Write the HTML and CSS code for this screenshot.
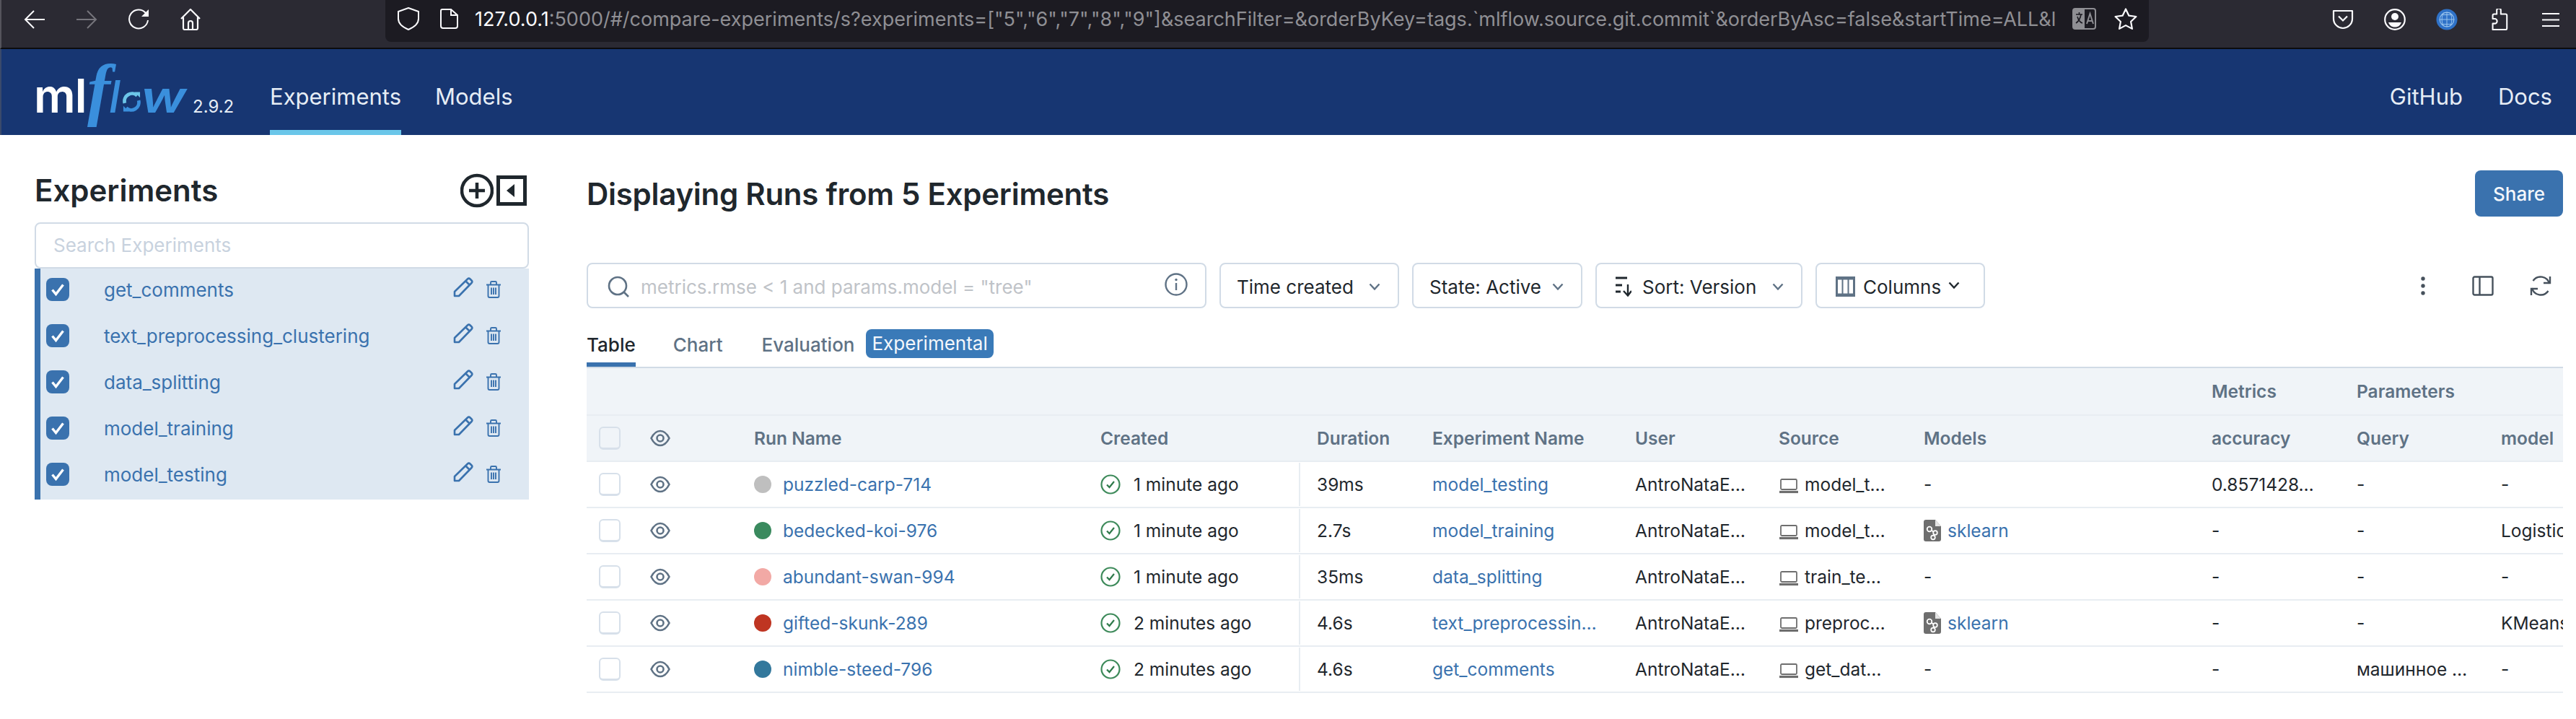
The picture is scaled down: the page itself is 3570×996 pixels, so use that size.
FILE: index.html
```html
<!DOCTYPE html>
<html lang="en">
<head>
<meta charset="utf-8">
<title>MLflow</title>
<link rel="stylesheet" href="styles.css">
</head>
<body>
<svg class="defs" xmlns="http://www.w3.org/2000/svg">
  <symbol id="i-pencil" viewBox="0 0 28 28"><path d="M2 26V20L20 2.5a2.5 2.5 0 0 1 3.5 0l2 2a2.5 2.5 0 0 1 0 3.5L8 26zM17.500 5.500l5 5" fill="none" stroke="currentColor" stroke-width="2.600" stroke-linejoin="round"/></symbol>
  <symbol id="i-trash" viewBox="0 0 22 24"><path d="M1 5.500H21M7 5.500V2.500a1.500 1.500 0 0 1 1.500-1.500h5a1.500 1.500 0 0 1 1.500 1.500v3M3.500 5.500V21a2 2 0 0 0 2 2h11a2 2 0 0 0 2-2V5.500M8 9.500V19M11 9.500V19M14 9.500V19" fill="none" stroke="currentColor" stroke-width="1.900"/></symbol>
  <symbol id="i-check" viewBox="0 0 32 32"><path d="M8.500 16.500l5 6 10-13" fill="none" stroke="#fff" stroke-width="3.400"/></symbol>
  <symbol id="i-eye" viewBox="0 0 28 24"><path d="M1.500 12C5 5 9 2 14 2s9 3 12.500 10C23 19 19 22 14 22S5 19 1.500 12z" fill="none" stroke="currentColor" stroke-width="2.600"/><circle cx="14" cy="12" r="4.500" fill="none" stroke="currentColor" stroke-width="2.600"/></symbol>
  <symbol id="i-ok" viewBox="0 0 28 28"><circle cx="14" cy="14" r="12.500" fill="none" stroke="#3d8a5a" stroke-width="2.200"/><path d="M9 14.500l3.500 3.500 6.500-8" fill="none" stroke="#2f7a4b" stroke-width="2.200"/></symbol>
  <symbol id="i-laptop" viewBox="0 0 26 21"><rect x="2" y="1" width="22" height="14" rx="1.500" fill="none" stroke="#6e6e6e" stroke-width="1.800"/><path d="M0 18.500H26" stroke="#6e6e6e" stroke-width="3.200"/></symbol>
  <symbol id="i-model" viewBox="0 0 24 30"><path d="M3 0H16L24 9V27a3 3 0 0 1-3 3H3a3 3 0 0 1-3-3V3a3 3 0 0 1 3-3z" fill="#6e6e6e"/><path d="M16 0V9H24z" fill="#e4e4e4"/><path d="M9 13l6 5-2 6" fill="none" stroke="#fff" stroke-width="1.800"/><circle cx="8" cy="13" r="3.300" fill="#6e6e6e" stroke="#fff" stroke-width="1.800"/><circle cx="16" cy="18" r="2.800" fill="#6e6e6e" stroke="#fff" stroke-width="1.800"/><circle cx="13" cy="24.500" r="2.800" fill="#6e6e6e" stroke="#fff" stroke-width="1.800"/></symbol>
  <symbol id="i-chev" viewBox="0 0 16 10"><path d="M1.500 1.500L8 8.500l6.500-7" fill="none" stroke="currentColor" stroke-width="2.400"/></symbol>
</svg>

<header class="browser">
  <div class="browser-nav">
    <svg class="bi" viewBox="0 0 30 30"><path d="M29 15H2M14 3L2 15l12 12" fill="none" stroke="#fbfbfe" stroke-width="2"/></svg>
    <svg class="bi" viewBox="0 0 30 30"><path d="M1 15H28M16 3l12 12-12 12" fill="none" stroke="#76757c" stroke-width="2"/></svg>
    <svg class="bi" viewBox="0 0 30 30"><path d="M25 6A13 13 0 1 0 28 16" fill="none" stroke="#fbfbfe" stroke-width="2"/><path d="M19 11H29V1z" fill="#fbfbfe"/></svg>
    <svg class="bi" viewBox="0 0 30 30"><path d="M2 14L15 1l13 13M5 12V27a2 2 0 0 0 2 2H23a2 2 0 0 0 2-2V12M12 29V20a3 3 0 0 1 6 0v9" fill="none" stroke="#fbfbfe" stroke-width="2.200"/></svg>
  </div>
  <div class="urlbar">
    <svg class="shield" viewBox="0 0 30 32"><path d="M15 1L29 6V16C29 23 22 28 15 31 8 28 1 23 1 16V6z" fill="none" stroke="#fbfbfe" stroke-width="2"/></svg>
    <svg class="page" viewBox="0 0 25 28"><path d="M3 1H15L24 9V24a3 3 0 0 1-3 3H4a3 3 0 0 1-3-3V3a2 2 0 0 1 2-2zM15 1V9H24" fill="none" stroke="#fbfbfe" stroke-width="2"/></svg>
    <div class="url"><span class="url-host">127.0.0.1</span>:5000/#/compare-experiments/s?experiments=["5","6","7","8","9"]&amp;searchFilter=&amp;orderByKey=tags.`mlflow.source.git.commit`&amp;orderByAsc=false&amp;startTime=ALL&amp;l</div>
    <svg class="translate" viewBox="0 0 33 30"><rect x="1" y="1" width="31" height="28" rx="3" fill="none" stroke="#8f8f94" stroke-width="2"/><path d="M1 4a3 3 0 0 1 3-3H17V29H4a3 3 0 0 1-3-3z" fill="#8f8f94"/><path d="M5 9H14M9.500 6V9M12 9C11 15 8 19 5 21M7 12C8 16 11 20 14 21" fill="none" stroke="#1c1b22" stroke-width="1.600"/><path d="M20 22L24.500 8 29 22M21.500 18H27.500" fill="none" stroke="#8f8f94" stroke-width="2"/></svg>
    <svg class="star" viewBox="0 0 32 30"><path d="M16 1.500l4.400 9.200 10 1.300-7.300 7 1.800 9.900-8.900-4.800-8.900 4.800 1.800-9.900-7.300-7 10-1.300z" fill="none" stroke="#fbfbfe" stroke-width="2.200" stroke-linejoin="round"/></svg>
  </div>
  <div class="browser-tools">
    <svg class="bi" viewBox="0 0 30 30"><path d="M2 3H28V14C28 22 21 27 15 27S2 22 2 14z" fill="none" stroke="#fbfbfe" stroke-width="2.200" stroke-linejoin="round"/><path d="M9 10.500l6 6 6-6" fill="none" stroke="#fbfbfe" stroke-width="2.200"/></svg>
    <svg class="bi" viewBox="0 0 30 30"><circle cx="15" cy="15" r="13.800" fill="none" stroke="#fbfbfe" stroke-width="2.200"/><circle cx="15" cy="11" r="5" fill="#fbfbfe"/><path d="M6 19H24C22 24 19 25.500 15 25.500S8 24 6 19z" fill="#fbfbfe"/></svg>
    <svg class="bi" viewBox="0 0 32 32"><circle cx="16" cy="16" r="15.500" fill="#2f72c8"/><circle cx="16" cy="16" r="10.500" fill="none" stroke="#9fc8ee" stroke-width="1.200"/><path d="M5 16H27M16 5V27M9 9H23M9 23H23M11 6C8 12 8 20 11 26M21 6C24 12 24 20 21 26" fill="none" stroke="#9fc8ee" stroke-width="1"/></svg>
    <svg class="bi" viewBox="0 0 30 32"><path d="M12 2.500a3 3 0 0 1 6 0V8H25a2 2 0 0 1 2 2V29a2 2 0 0 1-2 2H6V22H9a3.500 3.500 0 0 0 0-7H6V10a2 2 0 0 1 2-2H12z" fill="none" stroke="#fbfbfe" stroke-width="2.200" stroke-linejoin="round"/></svg>
    <svg class="bi" viewBox="0 0 30 30"><path d="M3 7H27M3 15.500H27M3 24H27" stroke="#fbfbfe" stroke-width="2.200"/></svg>
  </div>
</header>

<nav class="topnav">
  <div class="logo">
    <span class="logo-ml">ml</span><span class="logo-f">f</span><span class="logo-l">l</span>
    <svg class="logo-o" viewBox="0 0 26 30"><path d="M21 6A11 11 0 0 0 3 17" fill="none" stroke="#6cc5e8" stroke-width="5"/><path d="M5 24A11 11 0 0 0 23 13" fill="none" stroke="#3a8fdc" stroke-width="5"/><path d="M17 1H25V9z" fill="#6cc5e8"/><path d="M9 29H1V21z" fill="#3a8fdc"/></svg>
    <span class="logo-w">w</span>
    <span class="logo-ver">2.9.2</span>
  </div>
  <a class="navlink active">Experiments</a>
  <a class="navlink">Models</a>
  <div class="nav-right">
    <a class="navlink">GitHub</a>
    <a class="navlink">Docs</a>
  </div>
</nav>

<div class="content">
  <aside class="sidebar">
    <div class="side-head">
      <h2 class="side-title">Experiments</h2>
      <svg class="side-add" viewBox="0 0 46 48"><circle cx="23" cy="24" r="21" fill="none" stroke="#1f272d" stroke-width="4.500"/><path d="M23 13V35M12 24H34" stroke="#1f272d" stroke-width="4.500"/></svg>
      <svg class="side-collapse" viewBox="0 0 42 42"><rect x="2.500" y="2.500" width="37" height="37" fill="none" stroke="#1f272d" stroke-width="5"/><path d="M25 12V30L14 21z" fill="#1f272d"/></svg>
    </div>
    <div class="side-search">Search Experiments</div>
    <ul class="exp-list">
      <li class="exp"><span class="cb"><svg class="cb-mark"><use href="#i-check"/></svg></span><span class="exp-name">get_comments</span><svg class="pencil"><use href="#i-pencil"/></svg><svg class="trash"><use href="#i-trash"/></svg></li>
      <li class="exp"><span class="cb"><svg class="cb-mark"><use href="#i-check"/></svg></span><span class="exp-name">text_preprocessing_clustering</span><svg class="pencil"><use href="#i-pencil"/></svg><svg class="trash"><use href="#i-trash"/></svg></li>
      <li class="exp"><span class="cb"><svg class="cb-mark"><use href="#i-check"/></svg></span><span class="exp-name">data_splitting</span><svg class="pencil"><use href="#i-pencil"/></svg><svg class="trash"><use href="#i-trash"/></svg></li>
      <li class="exp"><span class="cb"><svg class="cb-mark"><use href="#i-check"/></svg></span><span class="exp-name">model_training</span><svg class="pencil"><use href="#i-pencil"/></svg><svg class="trash"><use href="#i-trash"/></svg></li>
      <li class="exp"><span class="cb"><svg class="cb-mark"><use href="#i-check"/></svg></span><span class="exp-name">model_testing</span><svg class="pencil"><use href="#i-pencil"/></svg><svg class="trash"><use href="#i-trash"/></svg></li>
    </ul>
  </aside>

  <main class="main">
    <div class="title-row">
      <h1 class="title">Displaying Runs from 5 Experiments</h1>
      <button class="share">Share</button>
    </div>

    <div class="toolbar">
      <div class="search">
        <svg class="search-ico" viewBox="0 0 30 30"><circle cx="14" cy="14" r="12" fill="none" stroke="#5f7285" stroke-width="2.600"/><path d="M22 22l7 7" stroke="#5f7285" stroke-width="2.600"/></svg>
        <span class="search-ph">metrics.rmse &lt; 1 and params.model = "tree"</span>
        <svg class="info-ico" viewBox="0 0 32 32"><circle cx="16" cy="16" r="14.500" fill="none" stroke="#5f7285" stroke-width="2.400"/><path d="M16 14V24" stroke="#5f7285" stroke-width="2.400"/><circle cx="16" cy="9.500" r="1.700" fill="#5f7285"/></svg>
      </div>
      <button class="tool tool-time"><span>Time created</span><svg class="chev"><use href="#i-chev"/></svg></button>
      <button class="tool tool-state"><span>State: Active</span><svg class="chev"><use href="#i-chev"/></svg></button>
      <button class="tool tool-sort">
        <svg class="sort-ico" viewBox="0 0 22 28"><path d="M0 2H16M0 12H9M0 21H7" stroke="#1f272d" stroke-width="3"/><path d="M17 11V26M11 20l6 6.500 5-6.500" fill="none" stroke="#1f272d" stroke-width="2.400"/></svg>
        <span>Sort: Version</span><svg class="chev"><use href="#i-chev"/></svg>
      </button>
      <button class="tool tool-cols">
        <svg class="cols-ico" viewBox="0 0 27 28"><rect x="1.500" y="1.500" width="24" height="25" fill="none" stroke="#5f7285" stroke-width="3"/><path d="M9.500 1.500V26.500M17.500 1.500V26.500" stroke="#5f7285" stroke-width="2"/><path d="M1.500 3H25.500M1.500 25H25.500" stroke="#5f7285" stroke-width="3"/></svg>
        <span>Columns</span><svg class="chev chev-dark"><use href="#i-chev"/></svg>
      </button>
      <div class="tool-right">
        <svg class="kebab" viewBox="0 0 6 26"><circle cx="3" cy="3" r="2.700" fill="#46515c"/><circle cx="3" cy="13" r="2.700" fill="#46515c"/><circle cx="3" cy="23" r="2.700" fill="#46515c"/></svg>
        <svg class="panel" viewBox="0 0 30 28"><rect x="1.500" y="1.500" width="27" height="25" rx="2" fill="none" stroke="#46515c" stroke-width="2.400"/><path d="M10.500 1.500V26.500" stroke="#46515c" stroke-width="2.400"/></svg>
        <svg class="refresh" viewBox="0 0 30 30"><path d="M27 12A12.500 12.500 0 0 0 4.500 8M3 18A12.500 12.500 0 0 0 25.500 22" fill="none" stroke="#46515c" stroke-width="2.400"/><path d="M28 2V11H19M2 28V19H11" fill="none" stroke="#46515c" stroke-width="2.400"/></svg>
      </div>
    </div>

    <div class="tabs">
      <span class="tab tab-active">Table</span>
      <span class="tab">Chart</span>
      <span class="tab">Evaluation</span>
      <span class="pill">Experimental</span>
    </div>

    <div class="table">
      <div class="grid head head-top">
        <span class="c-metrics">Metrics</span>
        <span class="c-params">Parameters</span>
      </div>
      <div class="grid head">
        <span class="box box-head"></span>
        <svg class="eye"><use href="#i-eye"/></svg>
        <span>Run Name</span>
        <span class="created">Created</span>
        <span>Duration</span>
        <span>Experiment Name</span>
        <span>User</span>
        <span>Source</span>
        <span>Models</span>
        <span>accuracy</span>
        <span>Query</span>
        <span>model</span>
      </div>

      <div class="grid row">
        <span class="box"></span>
        <svg class="eye"><use href="#i-eye"/></svg>
        <span class="run"><i class="dot dot-grey"></i><a class="link">puzzled-carp-714</a></span>
        <span class="created"><svg class="ok"><use href="#i-ok"/></svg>1 minute ago</span>
        <span>39ms</span>
        <a class="link">model_testing</a>
        <span>AntroNataE…</span>
        <span class="src"><svg class="laptop"><use href="#i-laptop"/></svg>model_t…</span>
        <span>-</span>
        <span>0.8571428…</span>
        <span>-</span>
        <span>-</span>
      </div>
      <div class="grid row">
        <span class="box"></span>
        <svg class="eye"><use href="#i-eye"/></svg>
        <span class="run"><i class="dot dot-green"></i><a class="link">bedecked-koi-976</a></span>
        <span class="created"><svg class="ok"><use href="#i-ok"/></svg>1 minute ago</span>
        <span>2.7s</span>
        <a class="link">model_training</a>
        <span>AntroNataE…</span>
        <span class="src"><svg class="laptop"><use href="#i-laptop"/></svg>model_t…</span>
        <span class="mdl"><svg class="model"><use href="#i-model"/></svg><a class="link">sklearn</a></span>
        <span>-</span>
        <span>-</span>
        <span class="clip">Logistic</span>
      </div>
      <div class="grid row">
        <span class="box"></span>
        <svg class="eye"><use href="#i-eye"/></svg>
        <span class="run"><i class="dot dot-pink"></i><a class="link">abundant-swan-994</a></span>
        <span class="created"><svg class="ok"><use href="#i-ok"/></svg>1 minute ago</span>
        <span>35ms</span>
        <a class="link">data_splitting</a>
        <span>AntroNataE…</span>
        <span class="src"><svg class="laptop"><use href="#i-laptop"/></svg>train_te…</span>
        <span>-</span>
        <span>-</span>
        <span>-</span>
        <span>-</span>
      </div>
      <div class="grid row">
        <span class="box"></span>
        <svg class="eye"><use href="#i-eye"/></svg>
        <span class="run"><i class="dot dot-red"></i><a class="link">gifted-skunk-289</a></span>
        <span class="created"><svg class="ok"><use href="#i-ok"/></svg>2 minutes ago</span>
        <span>4.6s</span>
        <a class="link">text_preprocessin…</a>
        <span>AntroNataE…</span>
        <span class="src"><svg class="laptop"><use href="#i-laptop"/></svg>preproc…</span>
        <span class="mdl"><svg class="model"><use href="#i-model"/></svg><a class="link">sklearn</a></span>
        <span>-</span>
        <span>-</span>
        <span class="clip">KMeans</span>
      </div>
      <div class="grid row">
        <span class="box"></span>
        <svg class="eye"><use href="#i-eye"/></svg>
        <span class="run"><i class="dot dot-blue"></i><a class="link">nimble-steed-796</a></span>
        <span class="created"><svg class="ok"><use href="#i-ok"/></svg>2 minutes ago</span>
        <span>4.6s</span>
        <a class="link">get_comments</a>
        <span>AntroNataE…</span>
        <span class="src"><svg class="laptop"><use href="#i-laptop"/></svg>get_dat…</span>
        <span>-</span>
        <span>-</span>
        <span>машинное …</span>
        <span>-</span>
      </div>
    </div>
  </main>
</div>
</body>
</html>
```
FILE: styles.css
```css
* { box-sizing: border-box; }
html, body { margin: 0; padding: 0; }
body {
  width: 3570px;
  height: 996px;
  overflow: hidden;
  background: #fff;
  color: #1f272d;
  font-family: Inter, "Liberation Sans", sans-serif;
  font-size: 26px;
}
.defs { display: none; }
svg { display: block; flex: none; }
button { font: inherit; color: inherit; background: none; cursor: pointer; }
ul { list-style: none; margin: 0; padding: 0; }
h1, h2 { margin: 0; }

/* browser chrome */
.browser {
  display: flex;
  height: 68px;
  background: #2b2a33;
  border-bottom: 2px solid #0c0c0d;
  border-left: 2px solid #55545c;
  align-items: flex-start;
}
.bi { width: 30px; height: 30px; }
.browser-nav { display: flex; gap: 42px; padding: 12px 0 0 31px; }
.urlbar {
  display: flex;
  align-items: center;
  width: 2444px;
  height: 58px;
  margin-left: 255px;
  padding: 0 16px 6px 17px;
  background: #1c1b22;
  border-radius: 0 0 8px 8px;
}
.shield { width: 30px; height: 32px; }
.page { width: 25px; height: 28px; margin-left: 29px; }
.url {
  flex: 1;
  min-width: 0;
  margin: 0 12px 0 23px;
  overflow: hidden;
  white-space: nowrap;
  font-size: 27px;
  color: #8f8f94;
}
.url-host { color: #fbfbfe; }
.translate { width: 33px; height: 30px; }
.star { width: 32px; height: 30px; margin-left: 25px; }
.browser-tools { display: flex; gap: 42px; margin-left: auto; padding: 12px 20px 0 0; }

/* top navigation */
.topnav {
  display: flex;
  height: 119px;
  background: #173672;
  color: #e6edf5;
  border-left: 2px solid #3a4a6b;
  font-size: 31px;
}
.logo {
  display: flex;
  align-items: baseline;
  width: 326px;
  padding: 0 0 0 45px;
  margin-right: 46px;
  height: 110px;
  white-space: nowrap;
}
.logo-ml { width: 62px; font-size: 64px; font-weight: 600; color: #fff; letter-spacing: -1px; }
.logo-f {
  width: 30px;
  margin-left: 12px;
  font-family: "Liberation Serif", serif;
  font-style: italic;
  font-weight: 700;
  font-size: 96px;
  color: #3a8fdc;
}
.logo-l, .logo-w { font-style: italic; color: #3a8fdc; }
.logo-l { width: 19px; font-size: 62px; font-weight: 500; }
.logo-o { width: 25px; height: 30px; }
.logo-w { width: 60px; font-size: 60px; font-weight: 600; transform: scaleX(1.25); transform-origin: left; }
.logo-ver { font-size: 24px; color: #e6edf5; margin-left: 12px; }
.navlink {
  display: flex;
  align-items: center;
  padding-top: 18px;
  height: 119px;
  border-bottom: 7px solid transparent;
  margin-right: 47px;
}
.navlink.active { border-bottom-color: #6ac6e9; }
.nav-right { display: flex; margin-left: auto; }
.nav-right .navlink { margin-right: 49px; }
.nav-right .navlink:last-child { margin-right: 33px; }

/* page */
.content { display: flex; }
.sidebar { width: 685px; margin-left: 48px; padding-top: 53px; flex: none; }
.side-head { display: flex; align-items: center; height: 48px; margin-bottom: 20px; }
.side-title { flex: 1; font-size: 42px; font-weight: 600; line-height: 48px; }
.side-add { width: 46px; height: 48px; margin-right: 4px; }
.side-collapse { width: 42px; height: 42px; margin-right: 3px; }
.side-search {
  height: 64px;
  padding-left: 24px;
  border: 2px solid #d1dbe6;
  border-radius: 8px;
  color: #c8d2de;
  line-height: 60px;
}
.exp-list { background: #dee8f2; border-left: 8px solid #3a72ae; color: #3a72ae; }
.exp { display: flex; align-items: center; height: 64px; padding: 0 0 6px 8px; }
.cb { width: 32px; height: 32px; border-radius: 8px; background: #3a72ae; }
.cb-mark { width: 32px; height: 32px; }
.exp-name { flex: 1; margin-left: 48px; }
.pencil { width: 28px; height: 28px; margin-top: -6px; }
.trash { width: 22px; height: 24px; margin: 0 38px 0 17px; }

.main { flex: 1; min-width: 0; margin-left: 80px; padding: 49px 18px 0 0; }
.title-row { display: flex; align-items: center; justify-content: space-between; height: 64px; margin-bottom: 64px; }
.title { font-size: 42px; font-weight: 600; letter-spacing: -0.27px; }
.share {
  width: 122px;
  height: 64px;
  border: 0;
  border-radius: 8px;
  background: #3a72ae;
  color: #f4f7fb;
  font-weight: 500;
}
.toolbar { display: flex; gap: 18px; align-items: center; height: 63px; }
.search {
  display: flex;
  align-items: center;
  width: 859px;
  height: 63px;
  padding: 3px 24px 0 27px;
  border: 2px solid #d1dbe6;
  border-radius: 8px;
}
.search-ico { width: 30px; height: 30px; }
.search-ph { flex: 1; margin-left: 16px; color: #bfc3c8; }
.info-ico { width: 32px; height: 32px; margin-bottom: 6px; }
.tool {
  display: flex;
  align-items: center;
  height: 63px;
  padding: 3px 0 0 22px;
  border: 2px solid #d1dbe6;
  border-radius: 8px;
  white-space: nowrap;
}
.tool-time { width: 249px; }
.tool-state { width: 236px; }
.tool-sort { width: 287px; padding-left: 26px; }
.tool-cols { width: 235px; padding-left: 26px; }
.chev { width: 16px; height: 10px; margin-left: auto; margin-right: 24px; color: #5f7285; }
.chev-dark { color: #1f272d; margin-right: 33px; margin-bottom: 4px; }
.sort-ico { width: 22px; height: 28px; margin-right: 15px; }
.cols-ico { width: 27px; height: 28px; margin-right: 11px; }
.tool-right { display: flex; align-items: center; margin-left: auto; margin-right: 16px; }
.kebab { width: 6px; height: 26px; }
.panel { width: 30px; height: 28px; margin-left: 65px; }
.refresh { width: 30px; height: 30px; margin-left: 50px; }

.tabs { display: flex; align-items: flex-end; height: 81px; padding-top: 29px; }
.tab { height: 52px; margin-right: 52px; color: #5f7285; font-weight: 500; line-height: 44px; border-bottom: 6px solid transparent; }
.tab:nth-child(2) { margin-right: 54px; }
.tab:nth-child(3) { margin-right: 16px; }
.tab-active { color: #1f272d; border-bottom-color: #3a72ae; }
.pill {
  align-self: flex-start;
  height: 40px;
  padding: 0 8px;
  border-radius: 8px;
  background: #3a7ab8;
  color: #f4f7fb;
  line-height: 40px;
}

/* table */
.table { overflow: hidden; border-top: 2px solid #d1dbe6; font-size: 24.5px; }
.grid {
  display: grid;
  grid-template-columns: 71px 144px 480px 300px 160px 281px 199px 201px 399px 201px 200px 86px;
  align-items: center;
  height: 64px;
  padding-left: 17px;
  border-bottom: 2px solid #e8edf2;
  white-space: nowrap;
}
.head { background: #f0f4f8; color: #5f7285; font-weight: 600; }
.head-top { height: 66px; }
.c-metrics { grid-column: 10; }
.c-params { grid-column: 11; }
.box {
  width: 30px;
  height: 32px;
  background: #fff;
  border: 2px solid #d7e0ea;
  border-bottom-width: 3px;
  border-radius: 6px;
}
.box-head { background: #f0f4f8; }
.eye { width: 28px; height: 24px; color: #5f7285; }
.run { display: flex; align-items: center; }
.dot { width: 24px; height: 24px; margin-right: 16px; border-radius: 50%; }
.dot-grey { background: #bfbfbf; }
.dot-green { background: #3a8a5e; }
.dot-pink { background: #f2a9a5; }
.dot-red { background: #bf3522; }
.dot-blue { background: #33789c; }
.link { color: #3a72ae; }
.created {
  display: flex;
  align-items: center;
  align-self: stretch;
  margin: 1px 23px 1px 0;
  border-right: 2px solid #e8edf2;
}
.head .created { border-right-color: transparent; }
.ok { width: 28px; height: 28px; margin-right: 18px; }
.src { display: flex; align-items: center; }
.laptop { width: 26px; height: 21px; margin: 4px 9px 0 1px; }
.mdl { display: flex; align-items: center; }
.model { width: 24px; height: 30px; margin-right: 9px; }
.clip { overflow: hidden; }
```
